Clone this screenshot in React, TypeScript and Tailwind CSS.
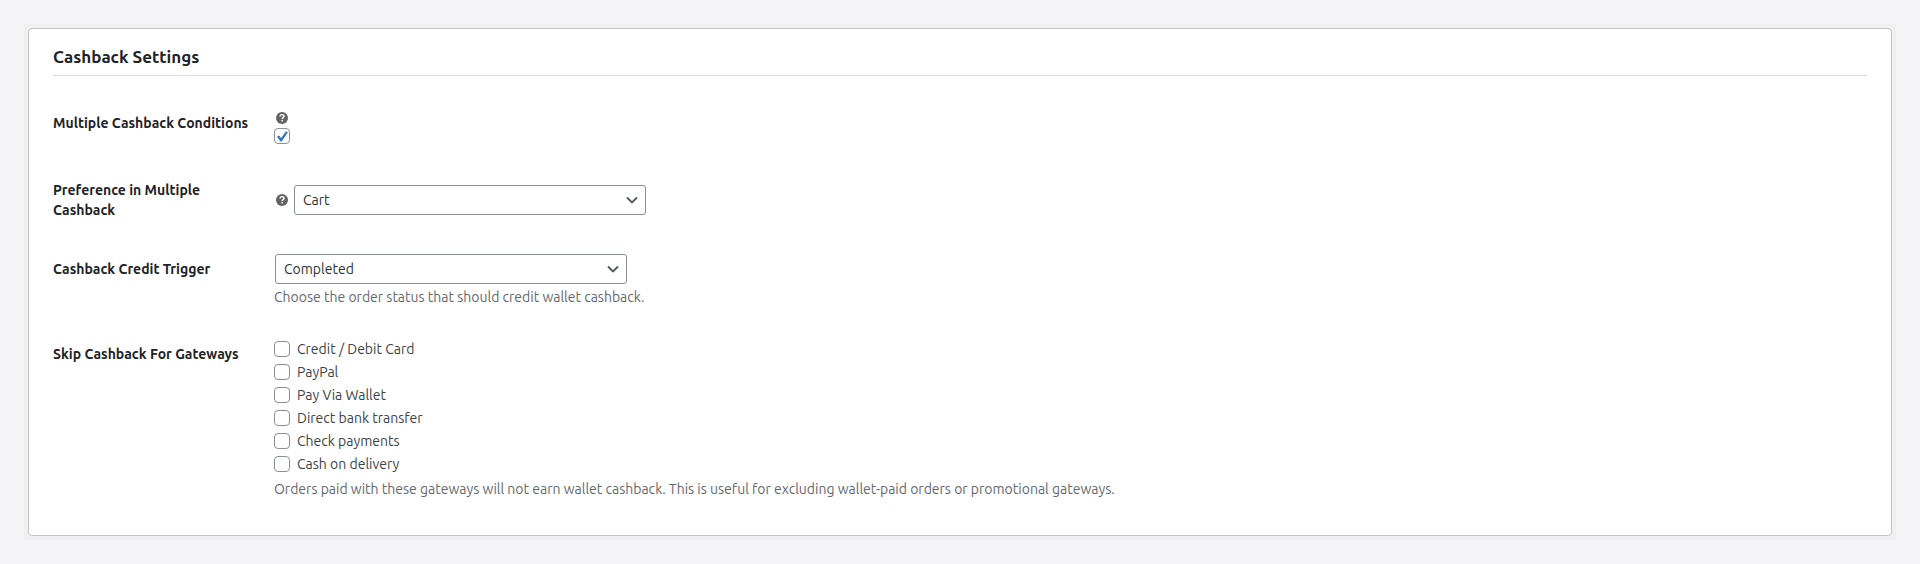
import React, { useState } from 'react';

const GATEWAYS = [
    { id: 'card', label: 'Credit / Debit Card' },
    { id: 'paypal', label: 'PayPal' },
    { id: 'wallet', label: 'Pay Via Wallet' },
    { id: 'bacs', label: 'Direct bank transfer' },
    { id: 'cheque', label: 'Check payments' },
    { id: 'cod', label: 'Cash on delivery' },
];

const HelpTip: React.FC = () => (
    <svg viewBox="0 0 20 20" className="block size-3 shrink-0" role="img" aria-label="Help">
        <circle cx="10" cy="10" r="10" fill="#646464" />
        <path d="M6.8 7.6C6.8 5.4 8.2 4.4 10 4.4s3.3 1 3.3 2.8c0 2.2-2.9 2.2-2.9 4.4" fill="none" stroke="#fff" strokeWidth="2.4" />
        <rect x="9" y="13.2" width="2.7" height="2.5" fill="#fff" />
    </svg>
);

const Checkbox: React.FC<{ id: string; checked: boolean; onChange: () => void }> = ({ id, checked, onChange }) => (
    <span className="grid size-4 shrink-0">
        <input
            id={id}
            type="checkbox"
            checked={checked}
            onChange={onChange}
            className="col-start-1 row-start-1 size-4 appearance-none rounded border border-[#8c8f94] bg-white"
        />
        {checked && (
            <svg viewBox="0 0 16 16" className="pointer-events-none col-start-1 row-start-1 size-4" aria-hidden="true">
                <path d="M3 8.7l2-1.3 2.1 2.6 4.9-6.7 1.9 1-6.2 9.1H6.5z" fill="#3577c4" />
            </svg>
        )}
    </span>
);

const SelectBox: React.FC<{ id: string; options: string[] }> = ({ id, options }) => (
    <div className="grid w-full max-w-88 items-center">
        <select id={id} className="col-start-1 row-start-1 h-[30px] w-full appearance-none rounded-[3px] border border-[#8c8f94] bg-white pr-6 pl-2 text-sm text-[#2c3338]">
            {options.map((option) => (
                <option key={option}>{option}</option>
            ))}
        </select>
        <svg viewBox="0 0 16 16" className="pointer-events-none col-start-1 row-start-1 mr-1.5 size-4 justify-self-end" aria-hidden="true">
            <path d="M3 5.5L8 10.5 13 5.5" fill="none" stroke="#50575e" strokeWidth="1.8" />
        </svg>
    </div>
);

const SettingRow: React.FC<{ label: string; htmlFor?: string; labelClass?: string; children: React.ReactNode }> = ({ label, htmlFor, labelClass = '', children }) => (
    <div className="flex items-start">
        <div className={`w-[221px] shrink-0 pr-4 text-sm leading-5 font-bold text-[#1d2327] ${labelClass}`}>
            {htmlFor ? <label htmlFor={htmlFor}>{label}</label> : <span>{label}</span>}
        </div>
        <div className="min-w-0 flex-1">{children}</div>
    </div>
);

const App: React.FC = () => {
    const [multiple, setMultiple] = useState(true);
    const [skipped, setSkipped] = useState<string[]>([]);

    const toggleGateway = (id: string) => {
        setSkipped((prev) => (prev.includes(id) ? prev.filter((item) => item !== id) : [...prev, id]));
    };

    return (
        <div className="min-h-screen bg-[#f5f5f8] p-6 font-['Ubuntu','Noto_Sans',sans-serif] text-[#3c434a]">
            <div className="bg-[#f0f0f1] p-1">
                <form className="rounded border border-[#c3c4c7] bg-white px-6 pt-4 pb-9">
                    <h2 className="border-b border-[#dcdcde] pb-1.5 text-[17px] leading-6 font-bold text-[#1d2327]">Cashback Settings</h2>

                    <div className="mt-8 space-y-8">
                        <SettingRow label="Multiple Cashback Conditions" htmlFor="multiple-cashback" labelClass="pt-[5px]">
                            <div className="space-y-1 py-1">
                                <div className="pl-0.5">
                                    <HelpTip />
                                </div>
                                <Checkbox id="multiple-cashback" checked={multiple} onChange={() => setMultiple(!multiple)} />
                            </div>
                        </SettingRow>

                        <SettingRow label="Preference in Multiple Cashback" htmlFor="cashback-preference">
                            <div className="flex items-center gap-1.5 pt-[5px] pl-0.5">
                                <HelpTip />
                                <SelectBox id="cashback-preference" options={['Cart', 'Product', 'Product Category']} />
                            </div>
                        </SettingRow>

                        <SettingRow label="Cashback Credit Trigger" htmlFor="credit-trigger" labelClass="pt-[7px]">
                            <div className="pt-0.5">
                                <div className="pl-px">
                                    <SelectBox id="credit-trigger" options={['Completed', 'Processing']} />
                                </div>
                                <p className="mt-1 text-sm leading-[19px] text-[#646970]">Choose the order status that should credit wallet cashback.</p>
                            </div>
                        </SettingRow>

                        <SettingRow label="Skip Cashback For Gateways" labelClass="pt-[5px]">
                            <ul className="space-y-[3px]">
                                {GATEWAYS.map((gateway) => (
                                    <li key={gateway.id} className="flex items-center gap-[7px] text-sm leading-5">
                                        <Checkbox
                                            id={`gateway-${gateway.id}`}
                                            checked={skipped.includes(gateway.id)}
                                            onChange={() => toggleGateway(gateway.id)}
                                        />
                                        <label htmlFor={`gateway-${gateway.id}`}>{gateway.label}</label>
                                    </li>
                                ))}
                            </ul>
                            <p className="mt-[5px] text-sm leading-5 text-[#646970]">
                                Orders paid with these gateways will not earn wallet cashback. This is useful for excluding wallet-paid orders or promotional gateways.
                            </p>
                        </SettingRow>
                    </div>
                </form>
            </div>
        </div>
    );
};

export default App;
